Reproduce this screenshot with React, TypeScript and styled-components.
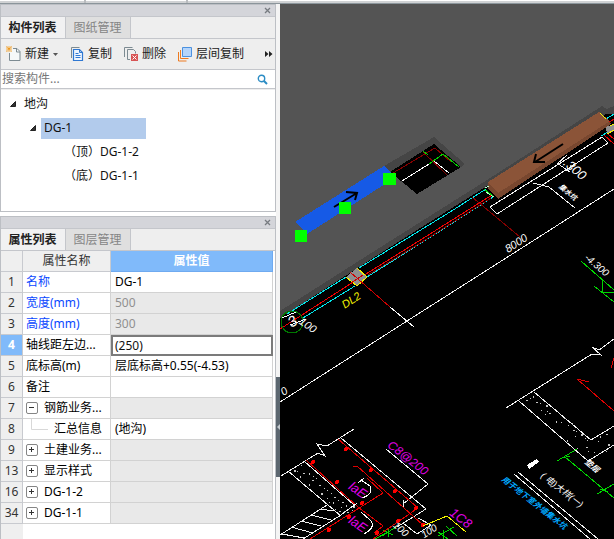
import React, { useState } from "react";
import styled, { createGlobalStyle } from "styled-components";

const GlobalStyle = createGlobalStyle`
  * { box-sizing: border-box; }
  html, body, #root { height: 100%; }
  body {
    margin: 0;
    overflow: hidden;
    background: #eeeeee;
    color: #111111;
    font: 12px/20px "Noto Sans", "Noto Sans CJK SC", sans-serif;
  }
  button, input { font: inherit; color: inherit; margin: 0; padding: 0; border: 0; background: none; }
  input:focus-visible { outline: none; }
  ul { list-style: none; margin: 0; padding: 0; }
`;

const Shell = styled.div`
  display: flex;
  flex-direction: column;
  min-height: 100vh;
  height: 100%;
`;

const TopStrip = styled.div`
  flex: none;
  display: grid;
  grid-template-columns: 84px 100px 1fr;
  gap: 2px;
  height: 4px;
  background: #b9bcbf;
  border-bottom: 1px solid #8b959b;
`;

const StripCell = styled.span`
  background: #ffffff;
  border-bottom: 2px solid #d0d2d4;
`;

const Workspace = styled.div`
  flex: 1;
  min-height: 0;
  display: flex;
`;

const Sidebar = styled.aside`
  flex: none;
  width: 276px;
  display: flex;
  flex-direction: column;
  gap: 4px;
  background: #ffffff;
`;

const Panel = styled.section<{ $grow?: boolean }>`
  display: flex;
  flex-direction: column;
  flex: ${(p) => (p.$grow ? "1" : "none")};
  min-height: 0;
  background: #eeeeee;
  border: 1px solid #bcbfc4;
  border-bottom-width: ${(p) => (p.$grow ? "0" : "1px")};
`;

const PanelBar = styled.div`
  flex: none;
  display: flex;
  justify-content: flex-end;
  align-items: center;
  height: 11px;
  padding-right: 4px;
  background: #d4d5da;
`;

const CloseButton = styled.button`
  display: flex;
  align-items: center;
  justify-content: center;
  width: 8px;
  height: 8px;
`;

const TabList = styled.div`
  flex: none;
  display: flex;
  height: 23px;
  border-top: 1px solid #c4c6cb;
  border-bottom: 1px solid #c4c6cb;
`;

const Tab = styled.button<{ $active: boolean }>`
  width: 65px;
  padding-right: 1px;
  line-height: 20px;
  border-right: 1px solid #c4c6cb;
  background: ${(p) => (p.$active ? "#f1f1f2" : "#dfdfdf")};
  color: ${(p) => (p.$active ? "#222222" : "#858585")};
  font-weight: ${(p) => (p.$active ? 700 : 400)};
`;

const Toolbar = styled.div`
  flex: none;
  display: flex;
  align-items: center;
  height: 31px;
  padding: 0 2px 0 5px;
  border-bottom: 1px solid #c4c6cb;
`;

const ToolButton = styled.button<{ $gap: number }>`
  display: flex;
  align-items: center;
  gap: 4px;
  margin-right: ${(p) => p.$gap}px;
  color: #222222;
  white-space: nowrap;
`;

const MoreButton = styled.button`
  display: flex;
  margin-left: auto;
`;

const SearchBox = styled.label`
  flex: none;
  display: flex;
  align-items: center;
  height: 19px;
  padding: 0 7px 0 1px;
  background: #ffffff;
  border-bottom: 1px solid #c4c6cb;
`;

const SearchInput = styled.input`
  flex: 1;
  min-width: 0;
  height: 18px;
  &::placeholder { color: #777777; opacity: 1; }
`;

const Tree = styled.ul`
  height: 122px;
  padding-top: 2px;
  background: #ffffff;
  border-top: 1px solid #eeeeee;
`;

const TreeItem = styled.li<{ $level: number }>`
  display: flex;
  align-items: center;
  gap: 3px;
  height: 24px;
  padding-left: ${(p) => 7 + p.$level * 20}px;
`;

const TreeToggle = styled.button`
  display: flex;
  align-items: center;
  justify-content: center;
  width: 10px;
  height: 14px;
`;

const TreeLabel = styled.button<{ $selected?: boolean }>`
  height: 21px;
  min-width: ${(p) => (p.$selected ? "105px" : "0")};
  padding: 0 3px;
  text-align: left;
  background: ${(p) => (p.$selected ? "#b2cbec" : "transparent")};
`;

const TreeSpacer = styled.span`
  width: 10px;
`;

const TableArea = styled.div`
  flex: 1;
  min-height: 0;
  overflow: hidden;
  padding-right: 2px;
  background: linear-gradient(to right, #efefef 22px, #ffffff 22px);
`;

const PropTable = styled.table`
  width: 100%;
  table-layout: fixed;
  border-collapse: separate;
  border-spacing: 0;
`;

const NumCol = styled.col`width: 22px;`;
const NameCol = styled.col`width: 88px;`;

const HeadCell = styled.th<{ $active?: boolean }>`
  height: 21px;
  padding: 0;
  line-height: 20px;
  font-weight: ${(p) => (p.$active ? 700 : 400)};
  color: ${(p) => (p.$active ? "#ffffff" : "#333333")};
  background: ${(p) => (p.$active ? "#80bafa" : "#efefef")};
  border-right: 1px solid ${(p) => (p.$active ? "#6faaf0" : "#c8cacf")};
  border-bottom: 1px solid ${(p) => (p.$active ? "#6faaf0" : "#c8cacf")};
`;

const NumCell = styled.th<{ $active: boolean }>`
  height: 21px;
  padding: 0;
  font-weight: ${(p) => (p.$active ? 700 : 400)};
  line-height: 20px;
  color: ${(p) => (p.$active ? "#ffffff" : "#333333")};
  background: ${(p) => (p.$active ? "#80bafa" : "#efefef")};
  border-right: 1px solid #c8cacf;
  border-bottom: 1px solid #c8cacf;
`;

const NameCell = styled.td<{ $key: boolean }>`
  height: 21px;
  padding: 0 0 0 3px;
  color: ${(p) => (p.$key ? "#0a48ff" : "#000000")};
  background: #ffffff;
  border-right: 1px solid #d2d2d2;
  border-bottom: 1px solid #d2d2d2;
`;

const NameContent = styled.div`
  display: flex;
  align-items: center;
  gap: 6px;
  height: 20px;
  white-space: nowrap;
`;

const ValueCell = styled.td<{ $muted: boolean }>`
  height: 21px;
  padding: 0 0 0 4px;
  line-height: 20px;
  color: ${(p) => (p.$muted ? "#909090" : "#000000")};
  background: ${(p) => (p.$muted ? "#e9e9e9" : "#ffffff")};
  border-right: 1px solid #d2d2d2;
  border-bottom: 1px solid #d2d2d2;
`;

const EditCell = styled.td`
  height: 21px;
  padding: 0;
  background: #ffffff;
`;

const EditInput = styled.input`
  display: block;
  width: 100%;
  height: 21px;
  padding-left: 2px;
  line-height: 17px;
  border: 2px solid #7b7b7b;
`;

const ExpandButton = styled.button`
  display: flex;
  align-items: center;
  justify-content: center;
  width: 12px;
  height: 12px;
  border: 1px solid #858585;
  border-radius: 2px;
  background: #ffffff;
`;

const Splitter = styled.div`
  flex: none;
  display: flex;
  flex-direction: column;
  width: 4px;
  padding-top: 373px;
  background: #f4f4f4;
`;

const SplitterHandle = styled.button`
  display: flex;
  align-items: center;
  justify-content: center;
  height: 100px;
  background: #5c6770;
`;

const Viewport = styled.main`
  flex: 1;
  min-width: 0;
  background: #000000;
`;

const Drawing = styled.svg`
  display: block;
  width: 100%;
  height: 100%;
`;

const Note = styled.text<{ $size: number; $bold?: boolean }>`
  font-family: "Liberation Sans Narrow", "Liberation Sans", "Noto Sans CJK SC", sans-serif;
  font-size: ${(p) => p.$size}px;
  font-style: italic;
  font-weight: ${(p) => (p.$bold ? 700 : 400)};
  text-anchor: middle;
  dominant-baseline: central;
`;

function CloseIcon() {
  return (
    <svg width="7" height="7" viewBox="0 0 7 7" fill="none" stroke="#777b80" strokeWidth="1.3">
      <path d="M1 1l5 5M6 1L1 6" />
    </svg>
  );
}

function NewIcon() {
  return (
    <svg width="15" height="16" viewBox="0 0 15 16" fill="none">
      <path d="M6 2.500h5l3 3v9H3.500V7" fill="#f6f8f8" />
      <path d="M7 2.500h4l3 3v9H3.500V7M10.500 2.500v3.500h3.500" stroke="#7d8b92" />
      <path d="M0.500 0.500l5 5M5.500 0.500l-5 5" stroke="#f0981a" strokeWidth="1.2" strokeDasharray="1.500 0.500" />
      <path d="M3 0v2M3 4v2M0 3h2M4 3h2" stroke="#f6b450" />
    </svg>
  );
}

function CopyIcon() {
  return (
    <svg width="14" height="16" viewBox="0 0 14 16" fill="none">
      <path d="M1.500 12V1.500h8" stroke="#7d8b92" />
      <path d="M3.500 3.500h6l3 3v8h-9z" fill="#eef5ff" stroke="#2f78d2" strokeWidth="1.2" />
      <path d="M9.500 3.500v3h3M5.500 7.500h3M5.500 9.500h5M5.500 11.500h5" stroke="#2f78d2" />
    </svg>
  );
}

function DeleteIcon() {
  return (
    <svg width="15" height="16" viewBox="0 0 15 16" fill="none">
      <path d="M1.500 11V1.500h8" stroke="#7d8b92" />
      <path d="M7 13.500H4.500v-10h6l2 2v2" stroke="#7d8b92" />
      <path d="M8 8h7v7H8z" fill="#d85555" />
      <path d="M9.500 9.500l4 4M13.500 9.500l-4 4" stroke="#fff" />
    </svg>
  );
}

function LayerCopyIcon() {
  return (
    <svg width="15" height="16" viewBox="0 0 15 16" fill="none">
      <path d="M1.500 6v9h8M3.500 4v8.500h8" stroke="#ee7b20" />
      <path d="M5.500 1.500h9v9h-9z" fill="#b5d5fb" stroke="#4c91df" />
    </svg>
  );
}

function SearchIcon() {
  return (
    <svg width="11" height="11" viewBox="0 0 11 11" fill="none" stroke="#2b8cc4">
      <circle cx="4.500" cy="4.500" r="3.200" strokeWidth="1.400" />
      <path d="M7 7l3 3" strokeWidth="2" />
    </svg>
  );
}

function TreeArrow() {
  return (
    <svg width="6" height="6" viewBox="0 0 6 6">
      <path d="M5.500 0.500v5h-5z" fill="#333" stroke="#222" />
    </svg>
  );
}

type Kind = "leaf" | "open" | "closed" | "child";
interface Row {
  no: number;
  name: string;
  value: string;
  kind: Kind;
  isKey?: boolean;
  muted?: boolean;
}

const rows: Row[] = [
  { no: 1, name: "名称", value: "DG-1", kind: "leaf", isKey: true },
  { no: 2, name: "宽度(mm)", value: "500", kind: "leaf", isKey: true, muted: true },
  { no: 3, name: "高度(mm)", value: "300", kind: "leaf", isKey: true, muted: true },
  { no: 4, name: "轴线距左边...", value: "(250)", kind: "leaf" },
  { no: 5, name: "底标高(m)", value: "层底标高+0.55(-4.53)", kind: "leaf" },
  { no: 6, name: "备注", value: "", kind: "leaf" },
  { no: 7, name: "钢筋业务...", value: "", kind: "open", muted: true },
  { no: 8, name: "汇总信息", value: "(地沟)", kind: "child" },
  { no: 9, name: "土建业务...", value: "", kind: "closed", muted: true },
  { no: 13, name: "显示样式", value: "", kind: "closed", muted: true },
  { no: 16, name: "DG-1-2", value: "", kind: "closed", muted: true },
  { no: 34, name: "DG-1-1", value: "", kind: "closed", muted: true },
];

function NameBody({ row }: { row: Row }) {
  if (row.kind === "child") {
    return (
      <NameContent>
        <svg width="22" height="20" viewBox="0 0 22 20" fill="none" stroke="#d8d8d8">
          <path d="M5.500 0v10.500H22" />
        </svg>
        {row.name}
      </NameContent>
    );
  }
  if (row.kind === "leaf") return <NameContent>{row.name}</NameContent>;
  return (
    <NameContent>
      <ExpandButton aria-label={row.name} aria-expanded={row.kind === "open"}>
        <svg width="6" height="6" viewBox="0 0 6 6" stroke="#333" fill="none">
          <path d={row.kind === "open" ? "M0 2.500h5" : "M0 2.500h5M2.500 0v5"} />
        </svg>
      </ExpandButton>
      {row.name}
    </NameContent>
  );
}

function ComponentPanel() {
  return (
    <Panel>
      <PanelBar><CloseButton aria-label="关闭"><CloseIcon /></CloseButton></PanelBar>
      <TabList role="tablist">
        <Tab role="tab" aria-selected $active>构件列表</Tab>
        <Tab role="tab" aria-selected={false} $active={false}>图纸管理</Tab>
      </TabList>
      <Toolbar>
        <ToolButton $gap={12}>
          <NewIcon />新建
          <svg width="5" height="3" viewBox="0 0 5 3"><path d="M0 0h5L2.500 3z" fill="#555" /></svg>
        </ToolButton>
        <ToolButton $gap={11}><CopyIcon />复制</ToolButton>
        <ToolButton $gap={11}><DeleteIcon />删除</ToolButton>
        <ToolButton $gap={0}><LayerCopyIcon />层间复制</ToolButton>
        <MoreButton aria-label="更多">
          <svg width="8" height="6" viewBox="0 0 8 6"><path d="M0 0l3.500 3L0 6zM4 0l3.500 3L4 6z" fill="#222" /></svg>
        </MoreButton>
      </Toolbar>
      <SearchBox>
        <SearchInput type="text" placeholder="搜索构件..." aria-label="搜索构件" />
        <SearchIcon />
      </SearchBox>
      <Tree role="tree">
        <TreeItem role="treeitem" aria-expanded $level={0}>
          <TreeToggle aria-label="收起"><TreeArrow /></TreeToggle>
          <TreeLabel>地沟</TreeLabel>
        </TreeItem>
        <TreeItem role="treeitem" aria-expanded aria-selected $level={1}>
          <TreeToggle aria-label="收起"><TreeArrow /></TreeToggle>
          <TreeLabel $selected>DG-1</TreeLabel>
        </TreeItem>
        {["（顶）DG-1-2", "（底）DG-1-1"].map((label) => (
          <TreeItem key={label} role="treeitem" $level={2}>
            <TreeSpacer />
            <TreeLabel>{label}</TreeLabel>
          </TreeItem>
        ))}
      </Tree>
    </Panel>
  );
}

function PropertyPanel() {
  const [offset, setOffset] = useState("(250)");
  return (
    <Panel $grow>
      <PanelBar><CloseButton aria-label="关闭"><CloseIcon /></CloseButton></PanelBar>
      <TabList role="tablist">
        <Tab role="tab" aria-selected $active>属性列表</Tab>
        <Tab role="tab" aria-selected={false} $active={false}>图层管理</Tab>
      </TabList>
      <TableArea>
        <PropTable>
          <colgroup><NumCol /><NameCol /><col /></colgroup>
          <thead>
            <tr>
              <HeadCell aria-label="序号" />
              <HeadCell scope="col">属性名称</HeadCell>
              <HeadCell scope="col" $active>属性值</HeadCell>
            </tr>
          </thead>
          <tbody>
            {rows.map((row) => (
              <tr key={row.no}>
                <NumCell scope="row" $active={row.no === 4}>{row.no}</NumCell>
                <NameCell $key={!!row.isKey}><NameBody row={row} /></NameCell>
                {row.no === 4 ? (
                  <EditCell>
                    <EditInput
                      aria-label={row.name}
                      value={offset}
                      onChange={(e) => setOffset(e.target.value)}
                    />
                  </EditCell>
                ) : (
                  <ValueCell $muted={!!row.muted}>{row.value}</ValueCell>
                )}
              </tr>
            ))}
          </tbody>
        </PropTable>
      </TableArea>
    </Panel>
  );
}

const rebarDots = [
  [346, 449], [371, 470], [395, 491], [416, 508], [398, 521], [377, 533],
  [313, 462], [337, 482], [362, 503], [349, 517], [329, 530], [423, 525],
];

const leftGravel = [
  [294, 470], [297, 471], [301, 465], [303, 473], [309, 473], [313, 476], [312, 480], [316, 478],
  [309, 484], [319, 485], [324, 488], [327, 490], [321, 493], [331, 493], [327, 498], [334, 497],
  [333, 502], [338, 500], [342, 502], [341, 507], [346, 505], [339, 511], [344, 511], [350, 507],
  [353, 506], [352, 510], [335, 509], [347, 512], [300, 476], [329, 502],
];

const rightGravel = [
  [526, 400], [530, 398], [533, 396], [536, 402], [540, 403], [541, 410], [546, 405], [547, 411],
  [545, 414], [549, 413], [556, 421], [561, 422], [564, 418], [568, 425], [572, 423], [573, 430],
  [575, 436], [576, 431], [581, 434], [585, 438], [587, 440], [583, 434], [567, 440], [577, 448],
  [586, 447], [588, 451], [600, 436], [606, 434], [598, 441], [606, 451], [608, 444], [594, 452],
];

function CadScene() {
  return (
    <Drawing viewBox="280 4 334 535" preserveAspectRatio="xMinYMin slice" fill="none" shapeRendering="crispEdges" role="img" aria-label="模型视图">
      <path d="M280 4H614V539H280z" fill="#000" />
      <path d="M280 4H614V114L606 114L487 186L398 242L280 318z" fill="#454545" />
      <path d="M280 4H614V106L607 109L602 106L487 180L376 250L280 311z" fill="#545454" />

      {/* pit opening */}
      <path d="M384 166L434 137L465 164L461 167L434 144L392 174z" fill="#454545" />
      <path d="M390 172L434 144L461 167L417 194z" fill="#000" />
      <path d="M393 173L435 148L451 162M423 152L447 175" stroke="#850000" />
      <path d="M402 181L429 164M434 161L449 173" stroke="#fff" />
      <path d="M429 164L443 154L459 167M423 151L428 155" stroke="#00d800" />

      {/* trench wall lines */}
      <g stroke="#00eaee">
        <path d="M486 189L450 212L359 268M346 277L287 314" />
        <path d="M493 197L440 231L367 277M355 286L303 318" />
        <path d="M606 119L614 114M601 136L610 131" />
      </g>
      <path d="M492 195L422 239L358 279L280 329" stroke="#f00000" />
      <path d="M491 198L422 242L368 275" stroke="#900000" />
      <path d="M472 197L520 237" stroke="#850000" />
      <path d="M604 135L614 144M608 134L614 139M608 123L614 119" stroke="#e00000" />
      <path d="M346 277L357 268L367 277L357 286z" fill="#909090" />
      <path d="M346 277L357 286M357 268L367 277L357 286" stroke="#f5f500" />
      <path d="M350 272L390 307M351 283L363 275" stroke="#d00000" />
      <path d="M390 307L414 327M404 323L410 319" stroke="#fff" />
      <path d="M606 127L614 124V131L607 134z" fill="#909090" />
      <path d="M610 126L614 124M607 134L614 130" stroke="#f5f500" />

      {/* long dimension lines and outlines */}
      <g stroke="#f2f2f2">
        <path d="M280 402L440 300L550 230L614 189" />
        <path d="M490 207L602 137L608 143L497 214z" />
        <path d="M533 183L549 187L575 208M557 163L570 172M557 164L567 155M565 171L574 165" />
        <path d="M506 408L592 354L601 355L592 347L599 350L614 339" />
        <path d="M534 392L591 440L614 426M519 401L588 461L614 445" />
        <path d="M518 472L598 539M514 474L590 539" />
        <path d="M281 476L318 453L325 456L317 444L327 446L354 429" />
        <path d="M341 438L426 509L397 527M418 518L431 525L417 534L403 523" />
        <path d="M304 461L354 505L341 515L303 539M288 471L341 516M327 505L280 535" />
        <path d="M320 509L334 511M311 515L331 520M301 521L321 526M291 527L313 533M282 534L304 538" />
        <path d="M386 449L428 484L403 504M403 500V507" />
      </g>

      {/* brown trench segment */}
      <path d="M488 182L599 112L611 124L498 199L488 189z" fill="#78472f" />
      <path d="M488 182L599 112L610 121L498 193z" fill="#8b5438" />
      <path d="M563 144L535 162M536 154L534 162L545 162" stroke="#000" strokeWidth="2" shapeRendering="auto" />
      <path d="M485 188L489 186M486 192L494 197" stroke="#b8ffd0" />
      <path d="M484 189L493 196" stroke="#00d800" />
      <path d="M600 113L606 119" stroke="#f5f500" />

      {/* selected blue segment with grips */}
      <path d="M295 222L384 166L396 177L307 234z" fill="#165ae6" />
      <path d="M334 207L357 193M346 192L357 193L355 200" stroke="#000" strokeWidth="2" shapeRendering="auto" />
      <path d="M295 230h12v12h-12zM339 202h12v12h-12zM383 173h13v12h-13z" fill="#00ff00" />

      {/* axis bubble */}
      <circle cx="292" cy="322" r="11" stroke="#007800" />
      <Note $size={15} fill="#fff" transform="translate(292 321) rotate(-32)">3</Note>
      <Note $size={11} fill="#fff" transform="translate(308 325) rotate(35)">100</Note>
      <path d="M282 318L296 312M290 325L306 319" stroke="#fff" />
      <Note $size={11} fill="#f5f500" transform="translate(351 300) rotate(-33)">DL2</Note>
      <Note $size={11} fill="#fff" transform="translate(516 243) rotate(-33)">8000</Note>
      <Note $size={11} fill="#fff" transform="translate(284 391) rotate(-33)">0</Note>
      <Note $size={13} fill="#fff" transform="translate(575 169) rotate(40)">.300</Note>
      <Note $size={7} $bold fill="#fff" transform="translate(568 192) rotate(40)">集水坑</Note>
      <Note $size={10} fill="#fff" transform="translate(597 265) rotate(40)">-4.300</Note>

      {/* elevation marks */}
      <g stroke="#00d800">
        <path d="M581 261L614 290M594 286L614 302M603 280L602 292L614 293" />
        <path d="M557 461L577 449M565 457L614 498M597 494L614 484M570 456L562 458M600 489L608 492" />
        <path d="M382 536L396 527M388 528V537M383 530L393 535M375 539L388 532M446 526L457 536M438 536L454 527M443 530V540M438 532L448 539" />
      </g>
      <g stroke="#e00000">
        <path d="M614 358L611 368M577 379L614 411M577 379L589 382" />
        <path d="M338 439L418 508L373 539M306 460L358 507L383 526L374 533" />
        <path d="M310 539L383 493L367 478M353 467L357 466L423 525" />
      </g>
      {rebarDots.map(([x, y]) => (
        <circle key={`${x}-${y}`} cx={x} cy={y} r="2" fill="#ff0000" />
      ))}
      {[...leftGravel, ...rightGravel].map(([x, y], i) => (
        <rect key={`${x}-${y}`} x={x} y={y} width={i % 3 ? 1 : 2} height={i % 4 ? 1 : 2} fill="#c4c4c4" />
      ))}
      <path d="M361 480L370 486Q374 494 362 498M361 512L370 520Q376 526 367 532M358 483L364 478M364 534L370 530M351 508L357 503" stroke="#fff" />

      {/* rebar and section notes */}
      <Note $size={12} fill="#e000e8" transform="translate(408 458) rotate(38)">C8@200</Note>
      <Note $size={13} fill="#e000e8" transform="translate(358 490) rotate(34)">laE</Note>
      <Note $size={13} fill="#e000e8" transform="translate(358 524) rotate(34)">laE</Note>
      <Note $size={13} fill="#e000e8" transform="translate(461 518) rotate(38)">1C8</Note>
      <path d="M423 526L447 516L466 532" stroke="#f5f500" />
      <Note $size={10} fill="#fff" transform="translate(401 529) rotate(42)">100</Note>
      <Note $size={10} fill="#fff" transform="translate(429 531) rotate(-33)">100</Note>
      <Note $size={8} $bold fill="#fff" transform="translate(592 466) rotate(40)">垫层</Note>
      <path d="M527 465L537 459L539 462L529 469z" fill="#fff" />
      <Note $size={9} fill="#fff" transform="translate(562 490) rotate(38)">( 电)大样(一)</Note>
      <Note $size={8} $bold fill="#00a8ff" transform="translate(534 503) rotate(38)">用于地下室外墙集水坑</Note>
    </Drawing>
  );
}

export default function App() {
  return (
    <>
      <GlobalStyle />
      <Shell>
        <TopStrip><StripCell /><StripCell /><StripCell /></TopStrip>
        <Workspace>
          <Sidebar>
            <ComponentPanel />
            <PropertyPanel />
          </Sidebar>
          <Splitter>
            <SplitterHandle aria-label="收起面板">
              <svg width="3" height="6" viewBox="0 0 3 6"><path d="M3 0v6L0 3z" fill="#c5cbd0" /></svg>
            </SplitterHandle>
          </Splitter>
          <Viewport><CadScene /></Viewport>
        </Workspace>
      </Shell>
    </>
  );
}
